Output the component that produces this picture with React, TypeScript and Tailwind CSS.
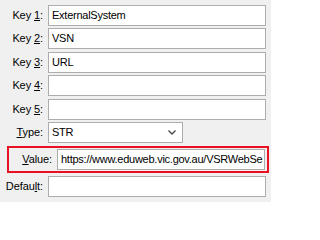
import React from 'react'

const font = { fontFamily: '"Liberation Sans", Arial, sans-serif' }

function Label({ children, className = '' }: { children: React.ReactNode; className?: string }) {
    return (
        <div className={`w-[44px] shrink-0 text-right pr-[1px] text-[11px] leading-none tracking-[-0.1px] text-black ${className}`}>
            {children}
        </div>
    )
}

function Field({ value = '' }: { value?: string }) {
    return (
        <div className="w-[218px] h-[21px] border border-[#adadad] bg-white flex items-center px-[3px] overflow-hidden whitespace-nowrap text-[11px] tracking-[-0.25px] text-black">
            {value}
        </div>
    )
}

export default function App() {
    return (
        <div className="w-[271px] h-[202px] bg-[#f0f0f0] overflow-hidden pt-[5px]" style={font}>
            {/* Keys */}
            <div className="flex items-center gap-[4px]">
                <Label>Key <u>1</u>:</Label>
                <Field value="ExternalSystem" />
            </div>
            <div className="flex items-center gap-[4px] mt-[2px]">
                <Label>Key <u>2</u>:</Label>
                <Field value="VSN" />
            </div>
            <div className="flex items-center gap-[4px] mt-[3px]">
                <Label>Key <u>3</u>:</Label>
                <Field value="URL" />
            </div>
            <div className="flex items-center gap-[4px] mt-[2px]">
                <Label>Key <u>4</u>:</Label>
                <Field />
            </div>
            <div className="flex items-center gap-[4px] mt-[3px]">
                <Label>Key <u>5</u>:</Label>
                <Field />
            </div>

            {/* Type */}
            <div className="flex items-center gap-[4px] mt-[2px]">
                <Label><u>T</u>ype:</Label>
                <div className="w-[135px] h-[21px] border border-[#adadad] bg-white flex items-center justify-between pl-[3px] pr-[6px] text-[11px] tracking-[-0.25px] text-black">
                    <span>STR</span>
                    <svg width="8" height="5" viewBox="0 0 8 5" fill="none">
                        <path d="M0.5 0.5 L4 4 L7.5 0.5" stroke="#444" strokeWidth="1.3" />
                    </svg>
                </div>
            </div>

            {/* Value (highlighted) */}
            <div className="ml-[7px] mt-[3px] w-[262px] h-[27px] border-2 border-[#e81123] flex items-center gap-[4px] pr-[2px]">
                <Label className="w-[35px]"><u>V</u>alue:</Label>
                <Field value="https://www.eduweb.vic.gov.au/VSRWebSe" />
            </div>

            {/* Default */}
            <div className="flex items-center gap-[4px] mt-[3px]">
                <Label>Defau<u>l</u>t:</Label>
                <Field />
            </div>
        </div>
    )
}
